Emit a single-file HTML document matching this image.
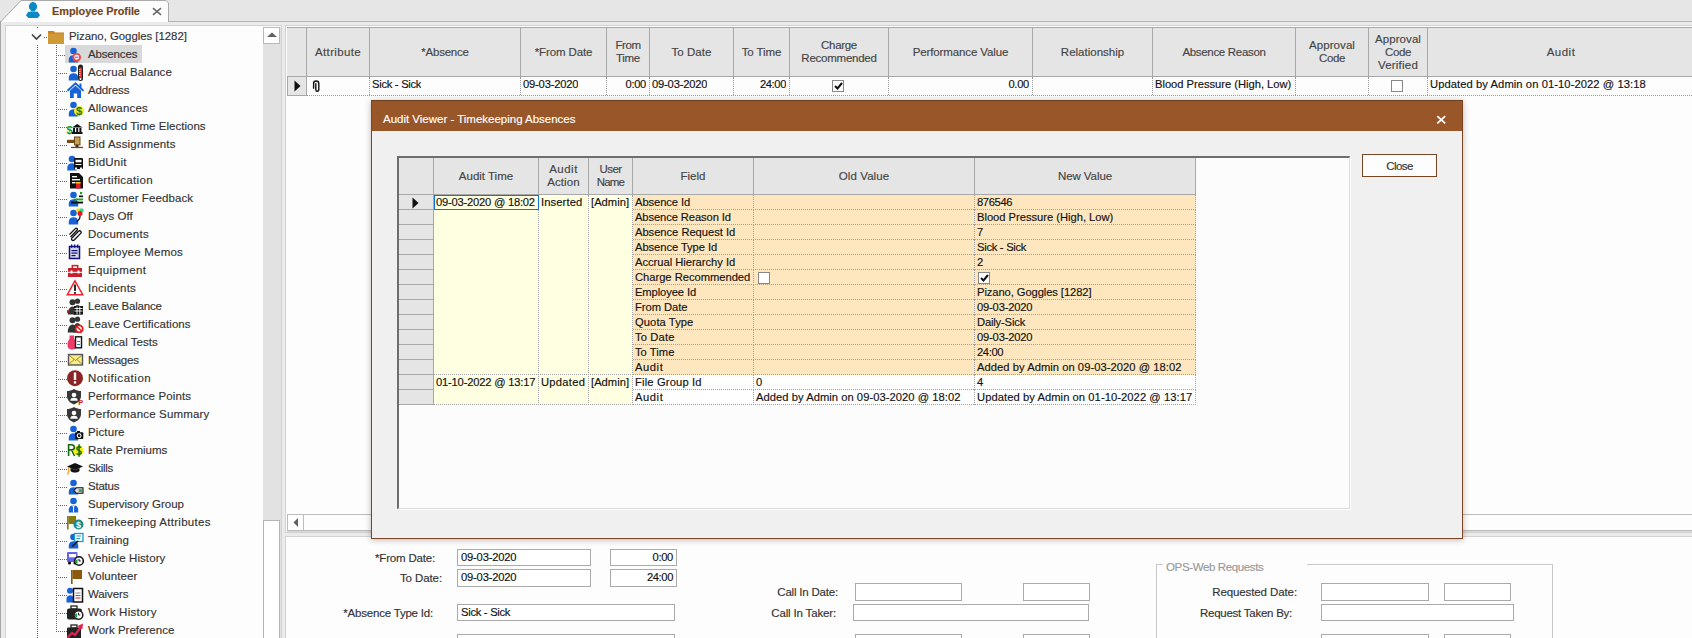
<!DOCTYPE html><html><head><meta charset="utf-8"><style>
*{box-sizing:border-box;margin:0;padding:0}
html,body{width:1692px;height:638px;overflow:hidden}
body{position:relative;-webkit-text-stroke:0.15px currentColor;background:#ebebeb;font-family:"Liberation Sans",sans-serif;font-size:11.5px;color:#1a1a1a}
.a{position:absolute}
.t{position:absolute;white-space:nowrap;line-height:14px}
.ti{position:absolute;left:88px;height:18px;line-height:18px;color:#333;white-space:nowrap}
.ic{position:absolute;left:66px;width:18px;height:18px}
.gh{position:absolute;background:#e5e5e5;border-right:1px solid #a8a8a8;border-bottom:1px solid #a8a8a8;color:#444;text-align:center;display:flex;align-items:center;justify-content:center;line-height:13px}
.gc{position:absolute;white-space:nowrap;overflow:hidden;color:#111;font-size:11.2px}
.box{position:absolute;background:#fff;border:1px solid #aaa}
.lbl{position:absolute;color:#333;white-space:nowrap;line-height:14px}
</style></head><body>
<div class="a" style="left:0px;top:0px;width:1692px;height:21px;background:#e6e6e6"></div>
<div class="a" style="left:0px;top:21px;width:1692px;height:1px;background:#b4b4b4"></div>
<svg class="a" style="left:0;top:0" width="175" height="23"><path d="M0.5 22 L21 0.5 L166 0.5 L168.5 3 L168.5 22" fill="#fcfcfc" stroke="#aaaaaa" stroke-width="1"/></svg>
<svg class="a" style="left:0;top:0" width="44" height="20"><path d="M33 1.8 L35.6 3 L37.2 5.8 L36.8 8.6 L35.2 10.2 V11.6 H30.8 V10.2 L29.2 8.6 L28.8 5.8 L30.4 3Z" fill="#0a8ac4"/><path d="M28.2 11.8 H37.8 L40 15.3 L37.6 18 H28.4 L26 15.3Z" fill="#0a8ac4"/></svg>
<div class="t" style="left:52px;top:4px;font-weight:bold;color:#74441a;font-size:10.9px;letter-spacing:-0.029px">Employee Profile</div>
<svg class="a" style="left:152px;top:7px" width="10" height="9"><path d="M1 1.2L9 7.8M9 1.2L1 7.8" stroke="#666" stroke-width="1.5"/></svg>
<div class="a" style="left:0px;top:21px;width:1px;height:617px;background:#a8a8a8"></div>
<div class="a" style="left:5px;top:25px;width:277px;height:630px;border:1px solid #d2d2d2;background:#fdfdfd"></div>
<div class="a" style="left:263px;top:27px;width:18px;height:611px;background:#e2e2e2"></div>
<div class="a" style="left:263px;top:27px;width:17px;height:17px;background:#fff;border:1px solid #b8b8b8"></div>
<svg class="a" style="left:266px;top:31px" width="12" height="8"><path d="M1 6 L6 1.5 L11 6Z" fill="#606060"/></svg>
<div class="a" style="left:263px;top:520px;width:17px;height:130px;background:#fff;border:1px solid #b4b4b4"></div>
<div class="a" style="left:37px;top:27px;width:1px;height:1px;background:#666"></div>
<div class="a" style="left:37px;top:45px;width:1px;height:594px;background:repeating-linear-gradient(180deg,#666 0 1px,transparent 1px 2px)"></div>
<div class="a" style="left:56px;top:45px;width:1px;height:587px;background:repeating-linear-gradient(180deg,#666 0 1px,transparent 1px 2px)"></div>
<div class="a" style="left:44px;top:37px;width:4px;height:1px;background:repeating-linear-gradient(90deg,#666 0 1px,transparent 1px 2px)"></div>
<svg class="a" style="left:31px;top:33px" width="11" height="8"><path d="M1 1.5 L5.5 6 L10 1.5" fill="none" stroke="#404040" stroke-width="1.6"/></svg>
<svg class="a" style="left:48px;top:30px" width="16" height="14"><path d="M0 1 h6 l1.5 2 H16 V14 H0Z" fill="#cf9a35"/><path d="M0 1 h5 l1 1.5 H0Z" fill="#d97616"/><rect x="0" y="2.5" width="16" height="1" fill="#c97a1e"/></svg>
<div class="t" style="left:69px;top:29px;color:#333;font-size:11.4px;letter-spacing:-0.025px">Pizano, Goggles [1282]</div>
<div class="a" style="left:58px;top:55px;width:9px;height:1px;background:repeating-linear-gradient(90deg,#666 0 1px,transparent 1px 2px)"></div>
<div class="a" style="left:65px;top:45px;width:77px;height:18px;background:#d9d9d9"></div>
<svg class="a" style="left:66px;top:45px" width="18" height="18" viewBox="0 0 18 18"><circle cx="7.5" cy="6" r="3.3" fill="#1662d6"/><path d="M2.8 17.5 V14.5 C2.8 11.8 5.0 10.3 7.5 10.3 C10.0 10.3 12.2 11.8 12.2 14.5 V17.5Z" fill="#1662d6"/><circle cx="10.7" cy="12.3" r="3.4" fill="#fff" stroke="#f04a4a" stroke-width="1.9"/><rect x="9" y="11.6" width="3.4" height="1.5" fill="#6a90e0"/></svg>
<div class="ti" style="top:45px;letter-spacing:-0.158px">Absences</div>
<div class="a" style="left:58px;top:73px;width:9px;height:1px;background:repeating-linear-gradient(90deg,#666 0 1px,transparent 1px 2px)"></div>
<svg class="a" style="left:66px;top:63px" width="18" height="18" viewBox="0 0 18 18"><circle cx="7.5" cy="6" r="3.3" fill="#1662d6"/><path d="M2.8 17.5 V14.5 C2.8 11.8 5.0 10.3 7.5 10.3 C10.0 10.3 12.2 11.8 12.2 14.5 V17.5Z" fill="#1662d6"/><rect x="12" y="1.5" width="5" height="16.5" rx="2.5" fill="#222"/><rect x="13.2" y="4.5" width="2.6" height="11" fill="#e03030"/><path d="M13.2 6.5h1.3M13.2 8.5h1.3M13.2 10.5h1.3M13.2 12.5h1.3" stroke="#fff" stroke-width="0.8"/><circle cx="14.5" cy="16" r="1" fill="#fff"/></svg>
<div class="ti" style="top:63px;letter-spacing:0.050px">Accrual Balance</div>
<div class="a" style="left:58px;top:91px;width:9px;height:1px;background:repeating-linear-gradient(90deg,#666 0 1px,transparent 1px 2px)"></div>
<svg class="a" style="left:66px;top:81px" width="18" height="18" viewBox="0 0 18 18"><path d="M1.5 9.8 L9.5 2.3 L17.5 9.8" fill="none" stroke="#1662d6" stroke-width="2"/><rect x="13.5" y="2.5" width="2" height="4.5" fill="#1662d6"/><path d="M4 9.5 L9.5 4.7 L15 9.5 V17 H11.2 V12.5 H7.8 V17 H4Z" fill="#1662d6"/></svg>
<div class="ti" style="top:81px;letter-spacing:-0.131px">Address</div>
<div class="a" style="left:58px;top:109px;width:9px;height:1px;background:repeating-linear-gradient(90deg,#666 0 1px,transparent 1px 2px)"></div>
<svg class="a" style="left:66px;top:99px" width="18" height="18" viewBox="0 0 18 18"><circle cx="7.5" cy="6" r="3.3" fill="#1662d6"/><path d="M2.8 17.5 V14.5 C2.8 11.8 5.0 10.3 7.5 10.3 C10.0 10.3 12.2 11.8 12.2 14.5 V17.5Z" fill="#1662d6"/><circle cx="13" cy="12" r="5" fill="#eeee22"/><text x="13" y="16.3" font-size="11" text-anchor="middle" fill="#1a7a1a" font-family="Liberation Sans" font-weight="bold">$</text></svg>
<div class="ti" style="top:99px;letter-spacing:0.170px">Allowances</div>
<div class="a" style="left:58px;top:127px;width:9px;height:1px;background:repeating-linear-gradient(90deg,#666 0 1px,transparent 1px 2px)"></div>
<svg class="a" style="left:66px;top:117px" width="18" height="18" viewBox="0 0 18 18"><text x="0.5" y="16.5" font-size="11" fill="#1a9a1a" font-family="Liberation Sans" font-weight="bold">$</text><path d="M6 10.5 L11.2 7 L16.5 10.5Z" fill="#111"/><rect x="7" y="11" width="2" height="4" fill="#111"/><rect x="10.2" y="11" width="2" height="4" fill="#111"/><rect x="13.4" y="11" width="2" height="4" fill="#111"/><rect x="6" y="15" width="10.5" height="2" fill="#111"/></svg>
<div class="ti" style="top:117px;letter-spacing:0.031px">Banked Time Elections</div>
<div class="a" style="left:58px;top:145px;width:9px;height:1px;background:repeating-linear-gradient(90deg,#666 0 1px,transparent 1px 2px)"></div>
<svg class="a" style="left:66px;top:135px" width="18" height="18" viewBox="0 0 18 18"><rect x="1" y="4.8" width="7.5" height="3.2" fill="#7a4a18"/><rect x="8.5" y="2" width="5.5" height="7.8" fill="#c8a050" stroke="#6a4a18" stroke-width="1"/><rect x="9.5" y="10" width="3" height="2" fill="#333"/><rect x="5" y="11.8" width="12" height="1.3" fill="#6a4a18"/></svg>
<div class="ti" style="top:135px;letter-spacing:0.177px">Bid Assignments</div>
<div class="a" style="left:58px;top:163px;width:9px;height:1px;background:repeating-linear-gradient(90deg,#666 0 1px,transparent 1px 2px)"></div>
<svg class="a" style="left:66px;top:153px" width="18" height="18" viewBox="0 0 18 18"><circle cx="6" cy="6" r="3.3" fill="#1662d6"/><path d="M1.2999999999999998 17.5 V14.5 C1.2999999999999998 11.8 3.5 10.3 6 10.3 C8.5 10.3 10.7 11.8 10.7 14.5 V17.5Z" fill="#1662d6"/><rect x="8" y="5" width="9" height="11" rx="1" fill="#111"/><rect x="9.5" y="6.8" width="6" height="2.5" fill="#fff"/><rect x="9.5" y="11" width="6" height="1" fill="#fff"/><rect x="9" y="14.5" width="2" height="2" fill="#fff"/><rect x="14" y="14.5" width="2" height="2" fill="#fff"/></svg>
<div class="ti" style="top:153px;letter-spacing:0.221px">BidUnit</div>
<div class="a" style="left:58px;top:181px;width:9px;height:1px;background:repeating-linear-gradient(90deg,#666 0 1px,transparent 1px 2px)"></div>
<svg class="a" style="left:66px;top:171px" width="18" height="18" viewBox="0 0 18 18"><path d="M4 2 H13 L17 6 V17.5 H4Z" fill="#111"/><rect x="6" y="5" width="5" height="1.4" fill="#fff"/><rect x="6" y="8" width="8" height="1.4" fill="#fff"/><rect x="6" y="11" width="3.5" height="1.4" fill="#fff"/><rect x="10" y="11" width="4.5" height="6.5" fill="#e02020"/><rect x="10" y="11" width="4.5" height="1.5" fill="#f0d020"/></svg>
<div class="ti" style="top:171px;letter-spacing:0.324px">Certification</div>
<div class="a" style="left:58px;top:199px;width:9px;height:1px;background:repeating-linear-gradient(90deg,#666 0 1px,transparent 1px 2px)"></div>
<svg class="a" style="left:66px;top:189px" width="18" height="18" viewBox="0 0 18 18"><circle cx="7.5" cy="6" r="3.3" fill="#1662d6"/><path d="M2.8 17.5 V14.5 C2.8 11.8 5.0 10.3 7.5 10.3 C10.0 10.3 12.2 11.8 12.2 14.5 V17.5Z" fill="#1662d6"/><rect x="14" y="3" width="2.2" height="2.2" fill="#20a020"/><rect x="13" y="6.5" width="4" height="1.7" fill="#111"/><rect x="8" y="9.5" width="9" height="1.9" fill="#20a020"/><rect x="5" y="12.6" width="12" height="1.9" fill="#111"/></svg>
<div class="ti" style="top:189px;letter-spacing:0.091px">Customer Feedback</div>
<div class="a" style="left:58px;top:217px;width:9px;height:1px;background:repeating-linear-gradient(90deg,#666 0 1px,transparent 1px 2px)"></div>
<svg class="a" style="left:66px;top:207px" width="18" height="18" viewBox="0 0 18 18"><circle cx="7.5" cy="6" r="3.3" fill="#1662d6"/><path d="M2.8 17.5 V14.5 C2.8 11.8 5.0 10.3 7.5 10.3 C10.0 10.3 12.2 11.8 12.2 14.5 V17.5Z" fill="#1662d6"/><path d="M14 8.5 Q14.5 12 10.5 14.8" stroke="#111" stroke-width="1.2" fill="none"/><circle cx="12.3" cy="3.6" r="2.3" fill="#f0e020"/><circle cx="15.6" cy="3.4" r="2.1" fill="#30d890"/><circle cx="14" cy="6.4" r="2.5" fill="#e81818"/></svg>
<div class="ti" style="top:207px;letter-spacing:0.025px">Days Off</div>
<div class="a" style="left:58px;top:235px;width:9px;height:1px;background:repeating-linear-gradient(90deg,#666 0 1px,transparent 1px 2px)"></div>
<svg class="a" style="left:66px;top:225px" width="18" height="18" viewBox="0 0 18 18"><path d="M5.5 13.5 L12.5 6.3 C14 4.8 16.2 6.9 14.7 8.4 L8.2 15 C6.7 16.5 4.5 14.4 6 12.9 L12 6.8" fill="none" stroke="#111" stroke-width="1.3"/><path d="M4.5 12 L11 5.3 C12.3 4 10.5 2.4 9.3 3.6 L3.5 9.5" fill="none" stroke="#111" stroke-width="1.3"/></svg>
<div class="ti" style="top:225px;letter-spacing:0.317px">Documents</div>
<div class="a" style="left:58px;top:253px;width:9px;height:1px;background:repeating-linear-gradient(90deg,#666 0 1px,transparent 1px 2px)"></div>
<svg class="a" style="left:66px;top:243px" width="18" height="18" viewBox="0 0 18 18"><rect x="3.5" y="3.5" width="10" height="12" fill="#d6d6e2" stroke="#101080" stroke-width="1.5"/><rect x="5" y="1.5" width="1.3" height="3.3" fill="#101080"/><rect x="8" y="1.5" width="1.3" height="3.3" fill="#101080"/><rect x="11" y="1.5" width="1.3" height="3.3" fill="#101080"/><rect x="5.5" y="7" width="6" height="1.2" fill="#101080"/><rect x="5.5" y="9.5" width="6" height="1.2" fill="#101080"/><rect x="5.5" y="12" width="4" height="1.2" fill="#101080"/></svg>
<div class="ti" style="top:243px;letter-spacing:0.213px">Employee Memos</div>
<div class="a" style="left:58px;top:271px;width:9px;height:1px;background:repeating-linear-gradient(90deg,#666 0 1px,transparent 1px 2px)"></div>
<svg class="a" style="left:66px;top:261px" width="18" height="18" viewBox="0 0 18 18"><rect x="6.3" y="4.6" width="5.4" height="3.2" fill="none" stroke="#c8202a" stroke-width="1.5"/><rect x="2" y="7" width="14" height="9" fill="#c8202a"/><rect x="2" y="10.8" width="14" height="1" fill="#fff"/><rect x="4.5" y="9.5" width="2" height="3" fill="#fff"/><rect x="11.5" y="9.5" width="2" height="3" fill="#fff"/></svg>
<div class="ti" style="top:261px;letter-spacing:0.378px">Equipment</div>
<div class="a" style="left:58px;top:289px;width:9px;height:1px;background:repeating-linear-gradient(90deg,#666 0 1px,transparent 1px 2px)"></div>
<svg class="a" style="left:66px;top:279px" width="18" height="18" viewBox="0 0 18 18"><path d="M9 1.8 L16.8 15.8 H1.2Z" fill="#fff" stroke="#f02030" stroke-width="1.4"/><rect x="8.1" y="5.5" width="1.8" height="6.5" fill="#111"/><rect x="8.1" y="13" width="1.8" height="1.8" fill="#111"/></svg>
<div class="ti" style="top:279px;letter-spacing:0.221px">Incidents</div>
<div class="a" style="left:58px;top:307px;width:9px;height:1px;background:repeating-linear-gradient(90deg,#666 0 1px,transparent 1px 2px)"></div>
<svg class="a" style="left:66px;top:297px" width="18" height="18" viewBox="0 0 18 18"><circle cx="11.5" cy="4.2" r="2.6" fill="#333"/><path d="M7.34 17.5 C7.34 11.8 8.9 8.0 11.5 8.0 C14.1 8.0 15.66 11.8 15.66 17.5Z" fill="#333"/><circle cx="6.5" cy="5.2" r="3" fill="#333"/><path d="M1.6999999999999993 17.5 C1.6999999999999993 13.2 3.5 9.399999999999999 6.5 9.399999999999999 C9.5 9.399999999999999 11.3 13.2 11.3 17.5Z" fill="#333"/><rect x="1" y="13" width="1.5" height="3" fill="#e02020"/><rect x="8" y="9" width="9" height="8.5" fill="#111"/><path d="M8.5 11.5h8M8.5 14h8M11 9.5v8M13.8 9.5v8" stroke="#fff" stroke-width="0.9"/></svg>
<div class="ti" style="top:297px;letter-spacing:-0.174px">Leave Balance</div>
<div class="a" style="left:58px;top:325px;width:9px;height:1px;background:repeating-linear-gradient(90deg,#666 0 1px,transparent 1px 2px)"></div>
<svg class="a" style="left:66px;top:315px" width="18" height="18" viewBox="0 0 18 18"><circle cx="11.5" cy="4.2" r="2.6" fill="#333"/><path d="M7.34 17.5 C7.34 11.8 8.9 8.0 11.5 8.0 C14.1 8.0 15.66 11.8 15.66 17.5Z" fill="#333"/><circle cx="6.5" cy="5.2" r="3" fill="#333"/><path d="M1.6999999999999993 17.5 C1.6999999999999993 13.2 3.5 9.399999999999999 6.5 9.399999999999999 C9.5 9.399999999999999 11.3 13.2 11.3 17.5Z" fill="#333"/><circle cx="13.2" cy="13.8" r="3.5" fill="#fff" stroke="#e81818" stroke-width="1.8"/><path d="M11 11.5 L15.5 16" stroke="#e81818" stroke-width="1.5"/></svg>
<div class="ti" style="top:315px;letter-spacing:0.084px">Leave Certifications</div>
<div class="a" style="left:58px;top:343px;width:9px;height:1px;background:repeating-linear-gradient(90deg,#666 0 1px,transparent 1px 2px)"></div>
<svg class="a" style="left:66px;top:333px" width="18" height="18" viewBox="0 0 18 18"><path d="M3.5 2.5 H8 V6 C10 7.5 11 9.5 11 12 C11 15 9 16.5 6 16.5 C3 16.5 1.5 15 1.5 12 C1.5 9.5 2 7.5 3.5 6Z" fill="#f03a6a"/><rect x="9.5" y="3.8" width="6" height="11" fill="#fff" stroke="#111" stroke-width="1.4"/><rect x="11" y="8" width="3" height="1" fill="#20a020"/><rect x="11" y="11" width="3" height="1" fill="#2080e0"/></svg>
<div class="ti" style="top:333px;letter-spacing:0.020px">Medical Tests</div>
<div class="a" style="left:58px;top:361px;width:9px;height:1px;background:repeating-linear-gradient(90deg,#666 0 1px,transparent 1px 2px)"></div>
<svg class="a" style="left:66px;top:351px" width="18" height="18" viewBox="0 0 18 18"><rect x="2.5" y="3.5" width="14" height="10.5" fill="#f6ee80" stroke="#555" stroke-width="1.4"/><path d="M3 4.2 L9.5 9.5 L16 4.2 M3 13.3 L8 8.5 M16 13.3 L11 8.5" fill="none" stroke="#9a7a40" stroke-width="0.9"/></svg>
<div class="ti" style="top:351px;letter-spacing:-0.202px">Messages</div>
<div class="a" style="left:58px;top:379px;width:9px;height:1px;background:repeating-linear-gradient(90deg,#666 0 1px,transparent 1px 2px)"></div>
<svg class="a" style="left:66px;top:369px" width="18" height="18" viewBox="0 0 18 18"><circle cx="9" cy="9.2" r="8" fill="#8b2424"/><rect x="7.8" y="3.5" width="2.4" height="7.5" fill="#fff"/><rect x="7.8" y="12.2" width="2.4" height="2.4" fill="#fff"/></svg>
<div class="ti" style="top:369px;letter-spacing:0.528px">Notification</div>
<div class="a" style="left:58px;top:397px;width:9px;height:1px;background:repeating-linear-gradient(90deg,#666 0 1px,transparent 1px 2px)"></div>
<svg class="a" style="left:66px;top:387px" width="18" height="18" viewBox="0 0 18 18"><path d="M8 2 C10.5 3.5 13 4 15 4 V9 C15 13 12 16 8 17.5 C4 16 1 13 1 9 V4 C3 4 5.5 3.5 8 2Z" fill="#383838"/><circle cx="8" cy="8" r="2.3" fill="#fff"/><path d="M4.3 13.8 C4.3 11.3 6 10.7 8 10.7 C10 10.7 11.7 11.3 11.7 13.8Z" fill="#fff"/><text x="12.2" y="18.2" font-size="7.5" fill="#e01818" font-family="Liberation Sans" font-weight="bold">P</text></svg>
<div class="ti" style="top:387px;letter-spacing:0.118px">Performance Points</div>
<div class="a" style="left:58px;top:415px;width:9px;height:1px;background:repeating-linear-gradient(90deg,#666 0 1px,transparent 1px 2px)"></div>
<svg class="a" style="left:66px;top:405px" width="18" height="18" viewBox="0 0 18 18"><path d="M8 2 C10.5 3.5 13 4 15 4 V9 C15 13 12 16 8 17.5 C4 16 1 13 1 9 V4 C3 4 5.5 3.5 8 2Z" fill="#383838"/><circle cx="8" cy="8" r="2.3" fill="#fff"/><path d="M4.3 13.8 C4.3 11.3 6 10.7 8 10.7 C10 10.7 11.7 11.3 11.7 13.8Z" fill="#fff"/></svg>
<div class="ti" style="top:405px;letter-spacing:0.171px">Performance Summary</div>
<div class="a" style="left:58px;top:433px;width:9px;height:1px;background:repeating-linear-gradient(90deg,#666 0 1px,transparent 1px 2px)"></div>
<svg class="a" style="left:66px;top:423px" width="18" height="18" viewBox="0 0 18 18"><circle cx="7.5" cy="6" r="3.3" fill="#1662d6"/><path d="M2.8 17.5 V14.5 C2.8 11.8 5.0 10.3 7.5 10.3 C10.0 10.3 12.2 11.8 12.2 14.5 V17.5Z" fill="#1662d6"/><rect x="9" y="9.3" width="8.3" height="6.8" rx="1" fill="#111"/><rect x="11" y="8" width="3" height="2" fill="#111"/><circle cx="13.1" cy="12.7" r="1.9" fill="none" stroke="#fff" stroke-width="1.1"/></svg>
<div class="ti" style="top:423px;letter-spacing:0.118px">Picture</div>
<div class="a" style="left:58px;top:451px;width:9px;height:1px;background:repeating-linear-gradient(90deg,#666 0 1px,transparent 1px 2px)"></div>
<svg class="a" style="left:66px;top:441px" width="18" height="18" viewBox="0 0 18 18"><circle cx="12.5" cy="9.8" r="5" fill="#f6f010"/><path d="M2.6 15 V3.8 H5.3 C7.6 3.8 8.3 5 8.3 6.4 C8.3 7.9 7.3 8.9 5.3 8.9 H2.6 M5.6 9 L8.5 15" fill="none" stroke="#1a6a10" stroke-width="1.6"/><path d="M10.6 12.6 C11.6 13.8 15.3 13.9 15.3 11.6 C15.3 9.4 10.9 9.9 10.9 7.4 C10.9 5.3 14.4 5.4 15.2 6.6 M13.1 3.3 V15.8" fill="none" stroke="#1a6a10" stroke-width="1.5"/></svg>
<div class="ti" style="top:441px;letter-spacing:0.005px">Rate Premiums</div>
<div class="a" style="left:58px;top:469px;width:9px;height:1px;background:repeating-linear-gradient(90deg,#666 0 1px,transparent 1px 2px)"></div>
<svg class="a" style="left:66px;top:459px" width="18" height="18" viewBox="0 0 18 18"><path d="M1 7.5 L9 4 L17 7.5 L9 11Z" fill="#111"/><path d="M4.5 9 V12 C7 14 11 14 13.5 12 V9 L9 11Z" fill="#111"/><path d="M2.6 8 V12.5 L1.5 15.5" stroke="#f0a020" stroke-width="1.3" fill="none"/></svg>
<div class="ti" style="top:459px;letter-spacing:-0.307px">Skills</div>
<div class="a" style="left:58px;top:487px;width:9px;height:1px;background:repeating-linear-gradient(90deg,#666 0 1px,transparent 1px 2px)"></div>
<svg class="a" style="left:66px;top:477px" width="18" height="18" viewBox="0 0 18 18"><circle cx="7.5" cy="6" r="3.3" fill="#1662d6"/><path d="M2.8 17.5 V14.5 C2.8 11.8 5.0 10.3 7.5 10.3 C10.0 10.3 12.2 11.8 12.2 14.5 V17.5Z" fill="#1662d6"/><path d="M7.8 13.3 L10.3 10.8 H17 V16.3 H10.3Z" fill="#d8d8d8" stroke="#111" stroke-width="1.1"/><rect x="12.8" y="12.3" width="3.5" height="2.6" fill="#20b040"/></svg>
<div class="ti" style="top:477px;letter-spacing:-0.220px">Status</div>
<div class="a" style="left:58px;top:505px;width:9px;height:1px;background:repeating-linear-gradient(90deg,#666 0 1px,transparent 1px 2px)"></div>
<svg class="a" style="left:66px;top:495px" width="18" height="18" viewBox="0 0 18 18"><circle cx="7.5" cy="6" r="3.3" fill="#1662d6"/><path d="M2.8 17.5 V14.5 C2.8 11.8 5.0 10.3 7.5 10.3 C10.0 10.3 12.2 11.8 12.2 14.5 V17.5Z" fill="#1662d6"/><path d="M5.8 10.6 H9.2 L8 12 V17.5 H7 V12Z" fill="#fff"/></svg>
<div class="ti" style="top:495px;letter-spacing:0.008px">Supervisory Group</div>
<div class="a" style="left:58px;top:523px;width:9px;height:1px;background:repeating-linear-gradient(90deg,#666 0 1px,transparent 1px 2px)"></div>
<svg class="a" style="left:66px;top:513px" width="18" height="18" viewBox="0 0 18 18"><rect x="1" y="3" width="1.6" height="13.5" fill="#857a10"/><rect x="2.5" y="3" width="7.5" height="8" fill="#857a10"/><circle cx="12.5" cy="11.5" r="5" fill="#1a8a8a"/><text x="12.5" y="15" font-size="9" text-anchor="middle" fill="#fff" font-family="Liberation Sans" font-weight="bold">$</text></svg>
<div class="ti" style="top:513px;letter-spacing:0.279px">Timekeeping Attributes</div>
<div class="a" style="left:58px;top:541px;width:9px;height:1px;background:repeating-linear-gradient(90deg,#666 0 1px,transparent 1px 2px)"></div>
<svg class="a" style="left:66px;top:531px" width="18" height="18" viewBox="0 0 18 18"><circle cx="7.5" cy="6" r="3.3" fill="#1662d6"/><path d="M2.8 17.5 V14.5 C2.8 11.8 5.0 10.3 7.5 10.3 C10.0 10.3 12.2 11.8 12.2 14.5 V17.5Z" fill="#1662d6"/><rect x="8.5" y="2.5" width="8.5" height="8" fill="#fff" stroke="#1a9ad0" stroke-width="1.3"/><path d="M10.5 5h4.5M10.5 7.5h3.5" stroke="#1a9ad0" stroke-width="1"/><path d="M6 15.5 L12 10" stroke="#111" stroke-width="1.6"/></svg>
<div class="ti" style="top:531px;letter-spacing:-0.046px">Training</div>
<div class="a" style="left:58px;top:559px;width:9px;height:1px;background:repeating-linear-gradient(90deg,#666 0 1px,transparent 1px 2px)"></div>
<svg class="a" style="left:66px;top:549px" width="18" height="18" viewBox="0 0 18 18"><rect x="1" y="3" width="10.5" height="10" rx="1" fill="#6464e6"/><rect x="3" y="5" width="7" height="3.3" fill="#fff"/><circle cx="3.5" cy="14" r="1.6" fill="#111"/><circle cx="9" cy="14" r="1.6" fill="#111"/><circle cx="13" cy="12" r="4.3" fill="#fff" stroke="#111" stroke-width="1.6"/><path d="M13 9.8 V12 H14.8" stroke="#111" stroke-width="1" fill="none"/><path d="M8.5 12.5 L11.5 10 V15Z" fill="#1a9a3a"/></svg>
<div class="ti" style="top:549px;letter-spacing:0.089px">Vehicle History</div>
<div class="a" style="left:58px;top:577px;width:9px;height:1px;background:repeating-linear-gradient(90deg,#666 0 1px,transparent 1px 2px)"></div>
<svg class="a" style="left:66px;top:567px" width="18" height="18" viewBox="0 0 18 18"><rect x="5" y="3" width="1.6" height="14" fill="#8a5a10"/><rect x="6.5" y="3" width="9.5" height="9" fill="#8a5a10"/></svg>
<div class="ti" style="top:567px;letter-spacing:0.101px">Volunteer</div>
<div class="a" style="left:58px;top:595px;width:9px;height:1px;background:repeating-linear-gradient(90deg,#666 0 1px,transparent 1px 2px)"></div>
<svg class="a" style="left:66px;top:585px" width="18" height="18" viewBox="0 0 18 18"><circle cx="4" cy="5.8" r="3" fill="#1662d6"/><path d="M0.5 17.5 V14 C0.5 11.5 2 10.3 4.5 10.3 C6 10.3 7 11 7 12 V17.5Z" fill="#1662d6"/><rect x="7.5" y="3.5" width="9" height="13.5" fill="#fff" stroke="#111" stroke-width="1.5"/><rect x="9.5" y="7.5" width="5" height="1" fill="#888"/><rect x="9.5" y="10" width="5" height="1" fill="#20a040"/><rect x="9.5" y="12.5" width="5" height="1" fill="#e02020"/></svg>
<div class="ti" style="top:585px;letter-spacing:-0.117px">Waivers</div>
<div class="a" style="left:58px;top:613px;width:9px;height:1px;background:repeating-linear-gradient(90deg,#666 0 1px,transparent 1px 2px)"></div>
<svg class="a" style="left:66px;top:603px" width="18" height="18" viewBox="0 0 18 18"><rect x="1" y="5.5" width="15" height="11" rx="2" fill="#222"/><rect x="5" y="3" width="6" height="3" fill="none" stroke="#222" stroke-width="1.3"/><circle cx="12.5" cy="12" r="4.3" fill="#fff" stroke="#222" stroke-width="1.6"/><path d="M12.5 9.8 V12 H14.3" stroke="#222" stroke-width="1" fill="none"/><path d="M8.0 12.5 L11.0 10 V15Z" fill="#1a9a3a"/></svg>
<div class="ti" style="top:603px;letter-spacing:0.255px">Work History</div>
<div class="a" style="left:58px;top:631px;width:9px;height:1px;background:repeating-linear-gradient(90deg,#666 0 1px,transparent 1px 2px)"></div>
<svg class="a" style="left:66px;top:621px" width="18" height="18" viewBox="0 0 18 18"><rect x="1" y="6.5" width="14" height="11.5" rx="1" fill="#222"/><rect x="5" y="4" width="6" height="3" fill="none" stroke="#222" stroke-width="1.3"/><path d="M1.5 16.5 L6 12 L9 14 L14.5 6.5" stroke="#e0204a" stroke-width="2.3" fill="none"/><path d="M11.5 5 L17 2.5 L16.3 8.5Z" fill="#e0204a"/></svg>
<div class="ti" style="top:621px;letter-spacing:0.016px">Work Preference</div>
<div class="a" style="left:285px;top:25px;width:1420px;height:508px;border:1px solid #d2d2d2;background:#fdfdfd"></div>
<div class="a" style="left:287px;top:27px;width:1405px;height:1px;background:#a8a8a8"></div>
<div class="gh" style="left:287px;top:28px;width:20px;height:49px"><div></div></div>
<div class="gh" style="left:307px;top:28px;width:63px;height:49px"><div><span style="letter-spacing:0.334px">Attribute</span></div></div>
<div class="gh" style="left:370px;top:28px;width:151px;height:49px"><div><span style="letter-spacing:-0.233px">*Absence</span></div></div>
<div class="gh" style="left:521px;top:28px;width:86px;height:49px"><div><span style="letter-spacing:-0.121px">*From Date</span></div></div>
<div class="gh" style="left:607px;top:28px;width:43px;height:49px"><div><span style="letter-spacing:-0.443px">From</span><br><span style="letter-spacing:-0.309px">Time</span></div></div>
<div class="gh" style="left:650px;top:28px;width:84px;height:49px"><div><span style="letter-spacing:0.061px">To Date</span></div></div>
<div class="gh" style="left:734px;top:28px;width:56px;height:49px"><div><span style="letter-spacing:-0.094px">To Time</span></div></div>
<div class="gh" style="left:790px;top:28px;width:99px;height:49px"><div><span style="letter-spacing:-0.304px">Charge</span><br><span style="letter-spacing:-0.238px">Recommended</span></div></div>
<div class="gh" style="left:889px;top:28px;width:144px;height:49px"><div><span style="letter-spacing:-0.118px">Performance Value</span></div></div>
<div class="gh" style="left:1033px;top:28px;width:120px;height:49px"><div>Relationship</div></div>
<div class="gh" style="left:1153px;top:28px;width:143px;height:49px"><div><span style="letter-spacing:-0.314px">Absence Reason</span></div></div>
<div class="gh" style="left:1296px;top:28px;width:73px;height:49px"><div><span style="letter-spacing:0.073px">Approval</span><br><span style="letter-spacing:-0.364px">Code</span></div></div>
<div class="gh" style="left:1369px;top:28px;width:59px;height:49px"><div><span style="letter-spacing:0.073px">Approval</span><br><span style="letter-spacing:-0.364px">Code</span><br><span style="letter-spacing:0.206px">Verified</span></div></div>
<div class="gh" style="left:1428px;top:28px;width:267px;height:49px"><div><span style="letter-spacing:0.497px">Audit</span></div></div>
<div class="a" style="left:287px;top:76px;width:20px;height:20px;border:1px solid #a8a8a8"></div>
<div class="a" style="left:288px;top:77px;width:18px;height:18px;background:#e5e5e5"></div>
<svg class="a" style="left:294px;top:80px" width="8" height="12"><path d="M0.5 0.5 L6.5 6 L0.5 11.5Z" fill="#111"/></svg>
<div class="a" style="left:307px;top:95px;width:1385px;height:1px;border-top:1px dotted #999"></div>
<div class="a" style="left:369px;top:77px;width:1px;height:18px;border-left:1px dotted #999"></div>
<div class="a" style="left:520px;top:77px;width:1px;height:18px;border-left:1px dotted #999"></div>
<div class="a" style="left:606px;top:77px;width:1px;height:18px;border-left:1px dotted #999"></div>
<div class="a" style="left:649px;top:77px;width:1px;height:18px;border-left:1px dotted #999"></div>
<div class="a" style="left:733px;top:77px;width:1px;height:18px;border-left:1px dotted #999"></div>
<div class="a" style="left:789px;top:77px;width:1px;height:18px;border-left:1px dotted #999"></div>
<div class="a" style="left:888px;top:77px;width:1px;height:18px;border-left:1px dotted #999"></div>
<div class="a" style="left:1032px;top:77px;width:1px;height:18px;border-left:1px dotted #999"></div>
<div class="a" style="left:1152px;top:77px;width:1px;height:18px;border-left:1px dotted #999"></div>
<div class="a" style="left:1295px;top:77px;width:1px;height:18px;border-left:1px dotted #999"></div>
<div class="a" style="left:1368px;top:77px;width:1px;height:18px;border-left:1px dotted #999"></div>
<div class="a" style="left:1427px;top:77px;width:1px;height:18px;border-left:1px dotted #999"></div>
<div class="a" style="left:1694px;top:77px;width:1px;height:18px;border-left:1px dotted #999"></div>
<div class="gc" style="left:372px;top:77px;line-height:14px;;letter-spacing:-0.277px">Sick - Sick</div>
<div class="gc" style="left:523px;top:77px;line-height:14px;;letter-spacing:-0.188px">09-03-2020</div>
<div class="gc" style="left:607px;width:39px;text-align:right;top:77px;line-height:14px;;letter-spacing:-0.333px">0:00</div>
<div class="gc" style="left:652px;top:77px;line-height:14px;;letter-spacing:-0.188px">09-03-2020</div>
<div class="gc" style="left:734px;width:52px;text-align:right;top:77px;line-height:14px;;letter-spacing:-0.382px">24:00</div>
<div class="gc" style="left:889px;width:140px;text-align:right;top:77px;line-height:14px;;letter-spacing:-0.300px">0.00</div>
<div class="gc" style="left:1155px;top:77px;line-height:14px;;letter-spacing:-0.022px">Blood Pressure (High, Low)</div>
<div class="gc" style="left:1430px;top:77px;line-height:14px;;letter-spacing:0.078px">Updated by Admin on 01-10-2022 @ 13:18</div>
<svg class="a" style="left:310px;top:78px" width="12" height="16"><path d="M3.6 10.8 V5.6 A2.6 2.6 0 0 1 8.8 5.6 V11.8 A1.5 1.5 0 0 1 5.8 11.8 V5.3" fill="none" stroke="#111" stroke-width="1.4"/></svg>
<div class="a" style="left:832px;top:80px;width:12px;height:12px;background:#fff;border:1px solid #888"></div>
<svg class="a" style="left:834px;top:82px" width="9" height="8"><path d="M1 4 L3.5 6.5 L8 1" fill="none" stroke="#111" stroke-width="2"/></svg>
<div class="a" style="left:1391px;top:80px;width:12px;height:12px;background:#fff;border:1px solid #888"></div>
<div class="a" style="left:287px;top:514px;width:1405px;height:17px;background:#fdfdfd;border-top:1px solid #bcbcbc;border-bottom:1px solid #bcbcbc"></div>
<div class="a" style="left:287px;top:531px;width:1405px;height:1px;background:#d8d8d8"></div>
<div class="a" style="left:287px;top:514px;width:17px;height:17px;background:#fff;border:1px solid #bcbcbc"></div>
<svg class="a" style="left:292px;top:517px" width="8" height="11"><path d="M6 1 L1.5 5.5 L6 10Z" fill="#606060"/></svg>
<div class="a" style="left:285px;top:536px;width:1420px;height:120px;border:1px solid #d2d2d2;background:#fdfdfd"></div>
<div class="lbl" style="right:1257px;top:551px;;letter-spacing:-0.189px">*From Date:</div>
<div class="lbl" style="right:1250px;top:571px;;letter-spacing:-0.090px">To Date:</div>
<div class="lbl" style="right:1259px;top:606px;;letter-spacing:-0.202px">*Absence Type Id:</div>
<div class="box" style="left:457px;top:549px;width:134px;height:17px"><div style="line-height:15px;padding-left:3px;color:#111;white-space:nowrap;font-size:11.2px;letter-spacing:-0.188px">09-03-2020</div></div>
<div class="box" style="left:610px;top:549px;width:67px;height:17px"><div style="line-height:15px;text-align:right;padding-right:3px;color:#111;white-space:nowrap;font-size:11.2px;letter-spacing:-0.333px">0:00</div></div>
<div class="box" style="left:457px;top:569px;width:134px;height:18px"><div style="line-height:15px;padding-left:3px;color:#111;white-space:nowrap;font-size:11.2px;letter-spacing:-0.188px">09-03-2020</div></div>
<div class="box" style="left:610px;top:569px;width:67px;height:18px"><div style="line-height:15px;text-align:right;padding-right:3px;color:#111;white-space:nowrap;font-size:11.2px;letter-spacing:-0.382px">24:00</div></div>
<div class="box" style="left:457px;top:604px;width:218px;height:17px"><div style="line-height:15px;padding-left:3px;color:#111;white-space:nowrap;font-size:11.2px;letter-spacing:-0.277px">Sick - Sick</div></div>
<div class="box" style="left:457px;top:634px;width:218px;height:16px"></div>
<div class="lbl" style="right:854px;top:585px;;letter-spacing:-0.198px">Call In Date:</div>
<div class="lbl" style="right:856px;top:606px;;letter-spacing:-0.154px">Call In Taker:</div>
<div class="box" style="left:855px;top:583px;width:107px;height:18px"></div>
<div class="box" style="left:1023px;top:583px;width:67px;height:18px"></div>
<div class="box" style="left:853px;top:604px;width:236px;height:17px"></div>
<div class="box" style="left:855px;top:634px;width:107px;height:16px"></div>
<div class="box" style="left:1023px;top:634px;width:67px;height:16px"></div>
<div class="a" style="left:1156px;top:564px;width:397px;height:80px;border:1px solid #c8c8c8;border-bottom:none"></div>
<div class="a" style="left:1163px;top:560px;width:144px;height:8px;background:#fdfdfd"></div>
<div class="t" style="left:1166px;top:560px;color:#999;letter-spacing:-0.369px">OPS-Web Requests</div>
<div class="lbl" style="right:395px;top:585px;;letter-spacing:-0.100px">Requested Date:</div>
<div class="lbl" style="right:400px;top:606px;;letter-spacing:-0.251px">Request Taken By:</div>
<div class="box" style="left:1321px;top:583px;width:108px;height:18px"></div>
<div class="box" style="left:1444px;top:583px;width:67px;height:18px"></div>
<div class="box" style="left:1321px;top:604px;width:193px;height:17px"></div>
<div class="box" style="left:1321px;top:634px;width:108px;height:16px"></div>
<div class="box" style="left:1444px;top:634px;width:67px;height:16px"></div>
<div class="a" style="left:371px;top:100px;width:1092px;height:439px;background:#f0f0f0;border:1px solid #7c4420;box-shadow:0 1px 6px rgba(70,35,15,0.33)"></div>
<div class="a" style="left:371px;top:100px;width:1092px;height:31px;background:#985629;border-top:1px solid #6e3f1f;border-left:1px solid #7a4520;border-right:1px solid #7a4520"></div>
<div class="t" style="left:383px;top:112px;color:#fff;letter-spacing:-0.010px">Audit Viewer - Timekeeping Absences</div>
<svg class="a" style="left:1436px;top:115px" width="10" height="10"><path d="M1.3 1.2L9.2 8.3M9.2 1.2L1.3 8.3" stroke="#fff" stroke-width="1.8"/></svg>
<div class="a" style="left:1362px;top:154px;width:75px;height:23px;border:1px solid #7a4622;background:#fdfdfd;text-align:center;line-height:23px;color:#333"><span style="letter-spacing:-0.600px">Close</span></div>
<div class="a" style="left:397px;top:156px;width:953px;height:353px;background:#fcfcfc;border-left:2px solid #6e6e6e;border-top:2px solid #6e6e6e;border-right:1px solid #dcdcdc;border-bottom:1px solid #dcdcdc;box-shadow:1px 1px 0 #fff"></div>
<div class="gh" style="left:399px;top:158px;width:35px;height:37px"><div></div></div>
<div class="gh" style="left:434px;top:158px;width:105px;height:37px"><div><span style="letter-spacing:-0.003px">Audit Time</span></div></div>
<div class="gh" style="left:539px;top:158px;width:50px;height:37px"><div><span style="letter-spacing:0.497px">Audit</span><br><span style="letter-spacing:0.128px">Action</span></div></div>
<div class="gh" style="left:589px;top:158px;width:44px;height:37px"><div><span style="letter-spacing:-0.627px">User</span><br><span style="letter-spacing:-0.825px">Name</span></div></div>
<div class="gh" style="left:633px;top:158px;width:121px;height:37px"><div>Field</div></div>
<div class="gh" style="left:754px;top:158px;width:221px;height:37px"><div><span style="letter-spacing:0.094px">Old Value</span></div></div>
<div class="gh" style="left:975px;top:158px;width:221px;height:37px"><div><span style="letter-spacing:-0.070px">New Value</span></div></div>
<div class="a" style="left:434px;top:195px;width:199px;height:210px;background:#ffffe1"></div>
<div class="a" style="left:399px;top:195px;width:35px;height:15px;background:#e5e5e5;border-right:1px solid #a8a8a8;border-bottom:1px solid #a8a8a8"></div>
<div class="a" style="left:633px;top:195px;width:563px;height:15px;background:#fee6be"></div>
<div class="a" style="left:633px;top:209px;width:563px;height:1px;border-top:1px dotted #a0a0a0"></div>
<div class="a" style="left:753px;top:195px;width:1px;height:15px;border-left:1px dotted #a0a0a0"></div>
<div class="a" style="left:974px;top:195px;width:1px;height:15px;border-left:1px dotted #a0a0a0"></div>
<div class="a" style="left:1195px;top:195px;width:1px;height:15px;border-left:1px dotted #a0a0a0"></div>
<div class="t" style="left:635px;top:195px;line-height:15px;color:#111;font-size:11.2px;letter-spacing:-0.082px">Absence Id</div>
<div class="t" style="left:977px;top:195px;line-height:15px;color:#111;font-size:11.2px;letter-spacing:-0.355px">876546</div>
<div class="a" style="left:399px;top:210px;width:35px;height:15px;background:#e5e5e5;border-right:1px solid #a8a8a8;border-bottom:1px solid #a8a8a8"></div>
<div class="a" style="left:633px;top:210px;width:563px;height:15px;background:#fee6be"></div>
<div class="a" style="left:633px;top:224px;width:563px;height:1px;border-top:1px dotted #a0a0a0"></div>
<div class="a" style="left:753px;top:210px;width:1px;height:15px;border-left:1px dotted #a0a0a0"></div>
<div class="a" style="left:974px;top:210px;width:1px;height:15px;border-left:1px dotted #a0a0a0"></div>
<div class="a" style="left:1195px;top:210px;width:1px;height:15px;border-left:1px dotted #a0a0a0"></div>
<div class="t" style="left:635px;top:210px;line-height:15px;color:#111;font-size:11.2px;letter-spacing:-0.103px">Absence Reason Id</div>
<div class="t" style="left:977px;top:210px;line-height:15px;color:#111;font-size:11.2px;letter-spacing:-0.022px">Blood Pressure (High, Low)</div>
<div class="a" style="left:399px;top:225px;width:35px;height:15px;background:#e5e5e5;border-right:1px solid #a8a8a8;border-bottom:1px solid #a8a8a8"></div>
<div class="a" style="left:633px;top:225px;width:563px;height:15px;background:#fee6be"></div>
<div class="a" style="left:633px;top:239px;width:563px;height:1px;border-top:1px dotted #a0a0a0"></div>
<div class="a" style="left:753px;top:225px;width:1px;height:15px;border-left:1px dotted #a0a0a0"></div>
<div class="a" style="left:974px;top:225px;width:1px;height:15px;border-left:1px dotted #a0a0a0"></div>
<div class="a" style="left:1195px;top:225px;width:1px;height:15px;border-left:1px dotted #a0a0a0"></div>
<div class="t" style="left:635px;top:225px;line-height:15px;color:#111;font-size:11.2px;letter-spacing:-0.033px">Absence Request Id</div>
<div class="t" style="left:977px;top:225px;line-height:15px;color:#111;font-size:11.2px">7</div>
<div class="a" style="left:399px;top:240px;width:35px;height:15px;background:#e5e5e5;border-right:1px solid #a8a8a8;border-bottom:1px solid #a8a8a8"></div>
<div class="a" style="left:633px;top:240px;width:563px;height:15px;background:#fee6be"></div>
<div class="a" style="left:633px;top:254px;width:563px;height:1px;border-top:1px dotted #a0a0a0"></div>
<div class="a" style="left:753px;top:240px;width:1px;height:15px;border-left:1px dotted #a0a0a0"></div>
<div class="a" style="left:974px;top:240px;width:1px;height:15px;border-left:1px dotted #a0a0a0"></div>
<div class="a" style="left:1195px;top:240px;width:1px;height:15px;border-left:1px dotted #a0a0a0"></div>
<div class="t" style="left:635px;top:240px;line-height:15px;color:#111;font-size:11.2px;letter-spacing:-0.066px">Absence Type Id</div>
<div class="t" style="left:977px;top:240px;line-height:15px;color:#111;font-size:11.2px;letter-spacing:-0.277px">Sick - Sick</div>
<div class="a" style="left:399px;top:255px;width:35px;height:15px;background:#e5e5e5;border-right:1px solid #a8a8a8;border-bottom:1px solid #a8a8a8"></div>
<div class="a" style="left:633px;top:255px;width:563px;height:15px;background:#fee6be"></div>
<div class="a" style="left:633px;top:269px;width:563px;height:1px;border-top:1px dotted #a0a0a0"></div>
<div class="a" style="left:753px;top:255px;width:1px;height:15px;border-left:1px dotted #a0a0a0"></div>
<div class="a" style="left:974px;top:255px;width:1px;height:15px;border-left:1px dotted #a0a0a0"></div>
<div class="a" style="left:1195px;top:255px;width:1px;height:15px;border-left:1px dotted #a0a0a0"></div>
<div class="t" style="left:635px;top:255px;line-height:15px;color:#111;font-size:11.2px;letter-spacing:-0.028px">Accrual Hierarchy Id</div>
<div class="t" style="left:977px;top:255px;line-height:15px;color:#111;font-size:11.2px">2</div>
<div class="a" style="left:399px;top:270px;width:35px;height:15px;background:#e5e5e5;border-right:1px solid #a8a8a8;border-bottom:1px solid #a8a8a8"></div>
<div class="a" style="left:633px;top:270px;width:563px;height:15px;background:#fee6be"></div>
<div class="a" style="left:633px;top:284px;width:563px;height:1px;border-top:1px dotted #a0a0a0"></div>
<div class="a" style="left:753px;top:270px;width:1px;height:15px;border-left:1px dotted #a0a0a0"></div>
<div class="a" style="left:974px;top:270px;width:1px;height:15px;border-left:1px dotted #a0a0a0"></div>
<div class="a" style="left:1195px;top:270px;width:1px;height:15px;border-left:1px dotted #a0a0a0"></div>
<div class="t" style="left:635px;top:270px;line-height:15px;color:#111;font-size:11.2px;letter-spacing:-0.023px">Charge Recommended</div>
<div class="a" style="left:758px;top:272px;width:12px;height:12px;background:#fff;border:1px solid #888"></div>
<div class="a" style="left:978px;top:272px;width:12px;height:12px;background:#fff;border:1px solid #888"></div>
<svg class="a" style="left:980px;top:274px" width="9" height="8"><path d="M1 4 L3.5 6.5 L8 1" fill="none" stroke="#111" stroke-width="2"/></svg>
<div class="a" style="left:399px;top:285px;width:35px;height:15px;background:#e5e5e5;border-right:1px solid #a8a8a8;border-bottom:1px solid #a8a8a8"></div>
<div class="a" style="left:633px;top:285px;width:563px;height:15px;background:#fee6be"></div>
<div class="a" style="left:633px;top:299px;width:563px;height:1px;border-top:1px dotted #a0a0a0"></div>
<div class="a" style="left:753px;top:285px;width:1px;height:15px;border-left:1px dotted #a0a0a0"></div>
<div class="a" style="left:974px;top:285px;width:1px;height:15px;border-left:1px dotted #a0a0a0"></div>
<div class="a" style="left:1195px;top:285px;width:1px;height:15px;border-left:1px dotted #a0a0a0"></div>
<div class="t" style="left:635px;top:285px;line-height:15px;color:#111;font-size:11.2px;letter-spacing:-0.096px">Employee Id</div>
<div class="t" style="left:977px;top:285px;line-height:15px;color:#111;font-size:11.2px;letter-spacing:-0.083px">Pizano, Goggles [1282]</div>
<div class="a" style="left:399px;top:300px;width:35px;height:15px;background:#e5e5e5;border-right:1px solid #a8a8a8;border-bottom:1px solid #a8a8a8"></div>
<div class="a" style="left:633px;top:300px;width:563px;height:15px;background:#fee6be"></div>
<div class="a" style="left:633px;top:314px;width:563px;height:1px;border-top:1px dotted #a0a0a0"></div>
<div class="a" style="left:753px;top:300px;width:1px;height:15px;border-left:1px dotted #a0a0a0"></div>
<div class="a" style="left:974px;top:300px;width:1px;height:15px;border-left:1px dotted #a0a0a0"></div>
<div class="a" style="left:1195px;top:300px;width:1px;height:15px;border-left:1px dotted #a0a0a0"></div>
<div class="t" style="left:635px;top:300px;line-height:15px;color:#111;font-size:11.2px;letter-spacing:-0.037px">From Date</div>
<div class="t" style="left:977px;top:300px;line-height:15px;color:#111;font-size:11.2px;letter-spacing:-0.188px">09-03-2020</div>
<div class="a" style="left:399px;top:315px;width:35px;height:15px;background:#e5e5e5;border-right:1px solid #a8a8a8;border-bottom:1px solid #a8a8a8"></div>
<div class="a" style="left:633px;top:315px;width:563px;height:15px;background:#fee6be"></div>
<div class="a" style="left:633px;top:329px;width:563px;height:1px;border-top:1px dotted #a0a0a0"></div>
<div class="a" style="left:753px;top:315px;width:1px;height:15px;border-left:1px dotted #a0a0a0"></div>
<div class="a" style="left:974px;top:315px;width:1px;height:15px;border-left:1px dotted #a0a0a0"></div>
<div class="a" style="left:1195px;top:315px;width:1px;height:15px;border-left:1px dotted #a0a0a0"></div>
<div class="t" style="left:635px;top:315px;line-height:15px;color:#111;font-size:11.2px;letter-spacing:0.078px">Quota Type</div>
<div class="t" style="left:977px;top:315px;line-height:15px;color:#111;font-size:11.2px;letter-spacing:-0.165px">Daily-Sick</div>
<div class="a" style="left:399px;top:330px;width:35px;height:15px;background:#e5e5e5;border-right:1px solid #a8a8a8;border-bottom:1px solid #a8a8a8"></div>
<div class="a" style="left:633px;top:330px;width:563px;height:15px;background:#fee6be"></div>
<div class="a" style="left:633px;top:344px;width:563px;height:1px;border-top:1px dotted #a0a0a0"></div>
<div class="a" style="left:753px;top:330px;width:1px;height:15px;border-left:1px dotted #a0a0a0"></div>
<div class="a" style="left:974px;top:330px;width:1px;height:15px;border-left:1px dotted #a0a0a0"></div>
<div class="a" style="left:1195px;top:330px;width:1px;height:15px;border-left:1px dotted #a0a0a0"></div>
<div class="t" style="left:635px;top:330px;line-height:15px;color:#111;font-size:11.2px;letter-spacing:0.134px">To Date</div>
<div class="t" style="left:977px;top:330px;line-height:15px;color:#111;font-size:11.2px;letter-spacing:-0.188px">09-03-2020</div>
<div class="a" style="left:399px;top:345px;width:35px;height:15px;background:#e5e5e5;border-right:1px solid #a8a8a8;border-bottom:1px solid #a8a8a8"></div>
<div class="a" style="left:633px;top:345px;width:563px;height:15px;background:#fee6be"></div>
<div class="a" style="left:633px;top:359px;width:563px;height:1px;border-top:1px dotted #a0a0a0"></div>
<div class="a" style="left:753px;top:345px;width:1px;height:15px;border-left:1px dotted #a0a0a0"></div>
<div class="a" style="left:974px;top:345px;width:1px;height:15px;border-left:1px dotted #a0a0a0"></div>
<div class="a" style="left:1195px;top:345px;width:1px;height:15px;border-left:1px dotted #a0a0a0"></div>
<div class="t" style="left:635px;top:345px;line-height:15px;color:#111;font-size:11.2px;letter-spacing:0.031px">To Time</div>
<div class="t" style="left:977px;top:345px;line-height:15px;color:#111;font-size:11.2px;letter-spacing:-0.382px">24:00</div>
<div class="a" style="left:399px;top:360px;width:35px;height:15px;background:#e5e5e5;border-right:1px solid #a8a8a8;border-bottom:1px solid #a8a8a8"></div>
<div class="a" style="left:633px;top:360px;width:563px;height:15px;background:#fee6be"></div>
<div class="a" style="left:633px;top:374px;width:563px;height:1px;border-top:1px dotted #a0a0a0"></div>
<div class="a" style="left:753px;top:360px;width:1px;height:15px;border-left:1px dotted #a0a0a0"></div>
<div class="a" style="left:974px;top:360px;width:1px;height:15px;border-left:1px dotted #a0a0a0"></div>
<div class="a" style="left:1195px;top:360px;width:1px;height:15px;border-left:1px dotted #a0a0a0"></div>
<div class="t" style="left:635px;top:360px;line-height:15px;color:#111;font-size:11.2px;letter-spacing:0.568px">Audit</div>
<div class="t" style="left:977px;top:360px;line-height:15px;color:#111;font-size:11.2px;letter-spacing:0.041px">Added by Admin on 09-03-2020 @ 18:02</div>
<div class="a" style="left:399px;top:375px;width:35px;height:15px;background:#e5e5e5;border-right:1px solid #a8a8a8;border-bottom:1px solid #a8a8a8"></div>
<div class="a" style="left:633px;top:375px;width:563px;height:15px;background:#ffffff"></div>
<div class="a" style="left:633px;top:389px;width:563px;height:1px;border-top:1px dotted #a0a0a0"></div>
<div class="a" style="left:753px;top:375px;width:1px;height:15px;border-left:1px dotted #a0a0a0"></div>
<div class="a" style="left:974px;top:375px;width:1px;height:15px;border-left:1px dotted #a0a0a0"></div>
<div class="a" style="left:1195px;top:375px;width:1px;height:15px;border-left:1px dotted #a0a0a0"></div>
<div class="t" style="left:635px;top:375px;line-height:15px;color:#111;font-size:11.2px;letter-spacing:0.155px">File Group Id</div>
<div class="t" style="left:756px;top:375px;line-height:15px;color:#111;font-size:11.2px">0</div>
<div class="t" style="left:977px;top:375px;line-height:15px;color:#111;font-size:11.2px">4</div>
<div class="a" style="left:399px;top:390px;width:35px;height:15px;background:#e5e5e5;border-right:1px solid #a8a8a8;border-bottom:1px solid #a8a8a8"></div>
<div class="a" style="left:633px;top:390px;width:563px;height:15px;background:#ffffff"></div>
<div class="a" style="left:633px;top:404px;width:563px;height:1px;border-top:1px dotted #a0a0a0"></div>
<div class="a" style="left:753px;top:390px;width:1px;height:15px;border-left:1px dotted #a0a0a0"></div>
<div class="a" style="left:974px;top:390px;width:1px;height:15px;border-left:1px dotted #a0a0a0"></div>
<div class="a" style="left:1195px;top:390px;width:1px;height:15px;border-left:1px dotted #a0a0a0"></div>
<div class="t" style="left:635px;top:390px;line-height:15px;color:#111;font-size:11.2px;letter-spacing:0.568px">Audit</div>
<div class="t" style="left:756px;top:390px;line-height:15px;color:#111;font-size:11.2px;letter-spacing:0.041px">Added by Admin on 09-03-2020 @ 18:02</div>
<div class="t" style="left:977px;top:390px;line-height:15px;color:#111;font-size:11.2px;letter-spacing:0.062px">Updated by Admin on 01-10-2022 @ 13:17</div>
<div class="a" style="left:538px;top:195px;width:1px;height:210px;border-left:1px dotted #a0a0a0"></div>
<div class="a" style="left:588px;top:195px;width:1px;height:210px;border-left:1px dotted #a0a0a0"></div>
<div class="a" style="left:632px;top:195px;width:1px;height:210px;border-left:1px dotted #a0a0a0"></div>
<div class="a" style="left:434px;top:404px;width:199px;height:1px;border-top:1px dotted #a0a0a0"></div>
<div class="a" style="left:434px;top:374px;width:199px;height:1px;border-top:1px dotted #a0a0a0"></div>
<div class="t" style="left:436px;top:195px;line-height:15px;color:#111;font-size:11.2px;letter-spacing:-0.218px">09-03-2020 @ 18:02</div>
<div class="a" style="left:434px;top:195px;width:105px;height:15px;border:1px solid #0a78d7"></div>
<div class="t" style="left:541px;top:195px;line-height:15px;color:#111;font-size:11.2px;letter-spacing:0.119px">Inserted</div>
<div class="t" style="left:591px;top:195px;line-height:15px;color:#111;font-size:11.2px;letter-spacing:0.022px">[Admin]</div>
<div class="t" style="left:436px;top:375px;line-height:15px;color:#111;font-size:11.2px;letter-spacing:-0.195px">01-10-2022 @ 13:17</div>
<div class="t" style="left:541px;top:375px;line-height:15px;color:#111;font-size:11.2px;letter-spacing:0.276px">Updated</div>
<div class="t" style="left:591px;top:375px;line-height:15px;color:#111;font-size:11.2px;letter-spacing:0.022px">[Admin]</div>
<svg class="a" style="left:412px;top:197px" width="8" height="12"><path d="M0.5 0.5 L6.5 6 L0.5 11.5Z" fill="#111"/></svg>
</body></html>
